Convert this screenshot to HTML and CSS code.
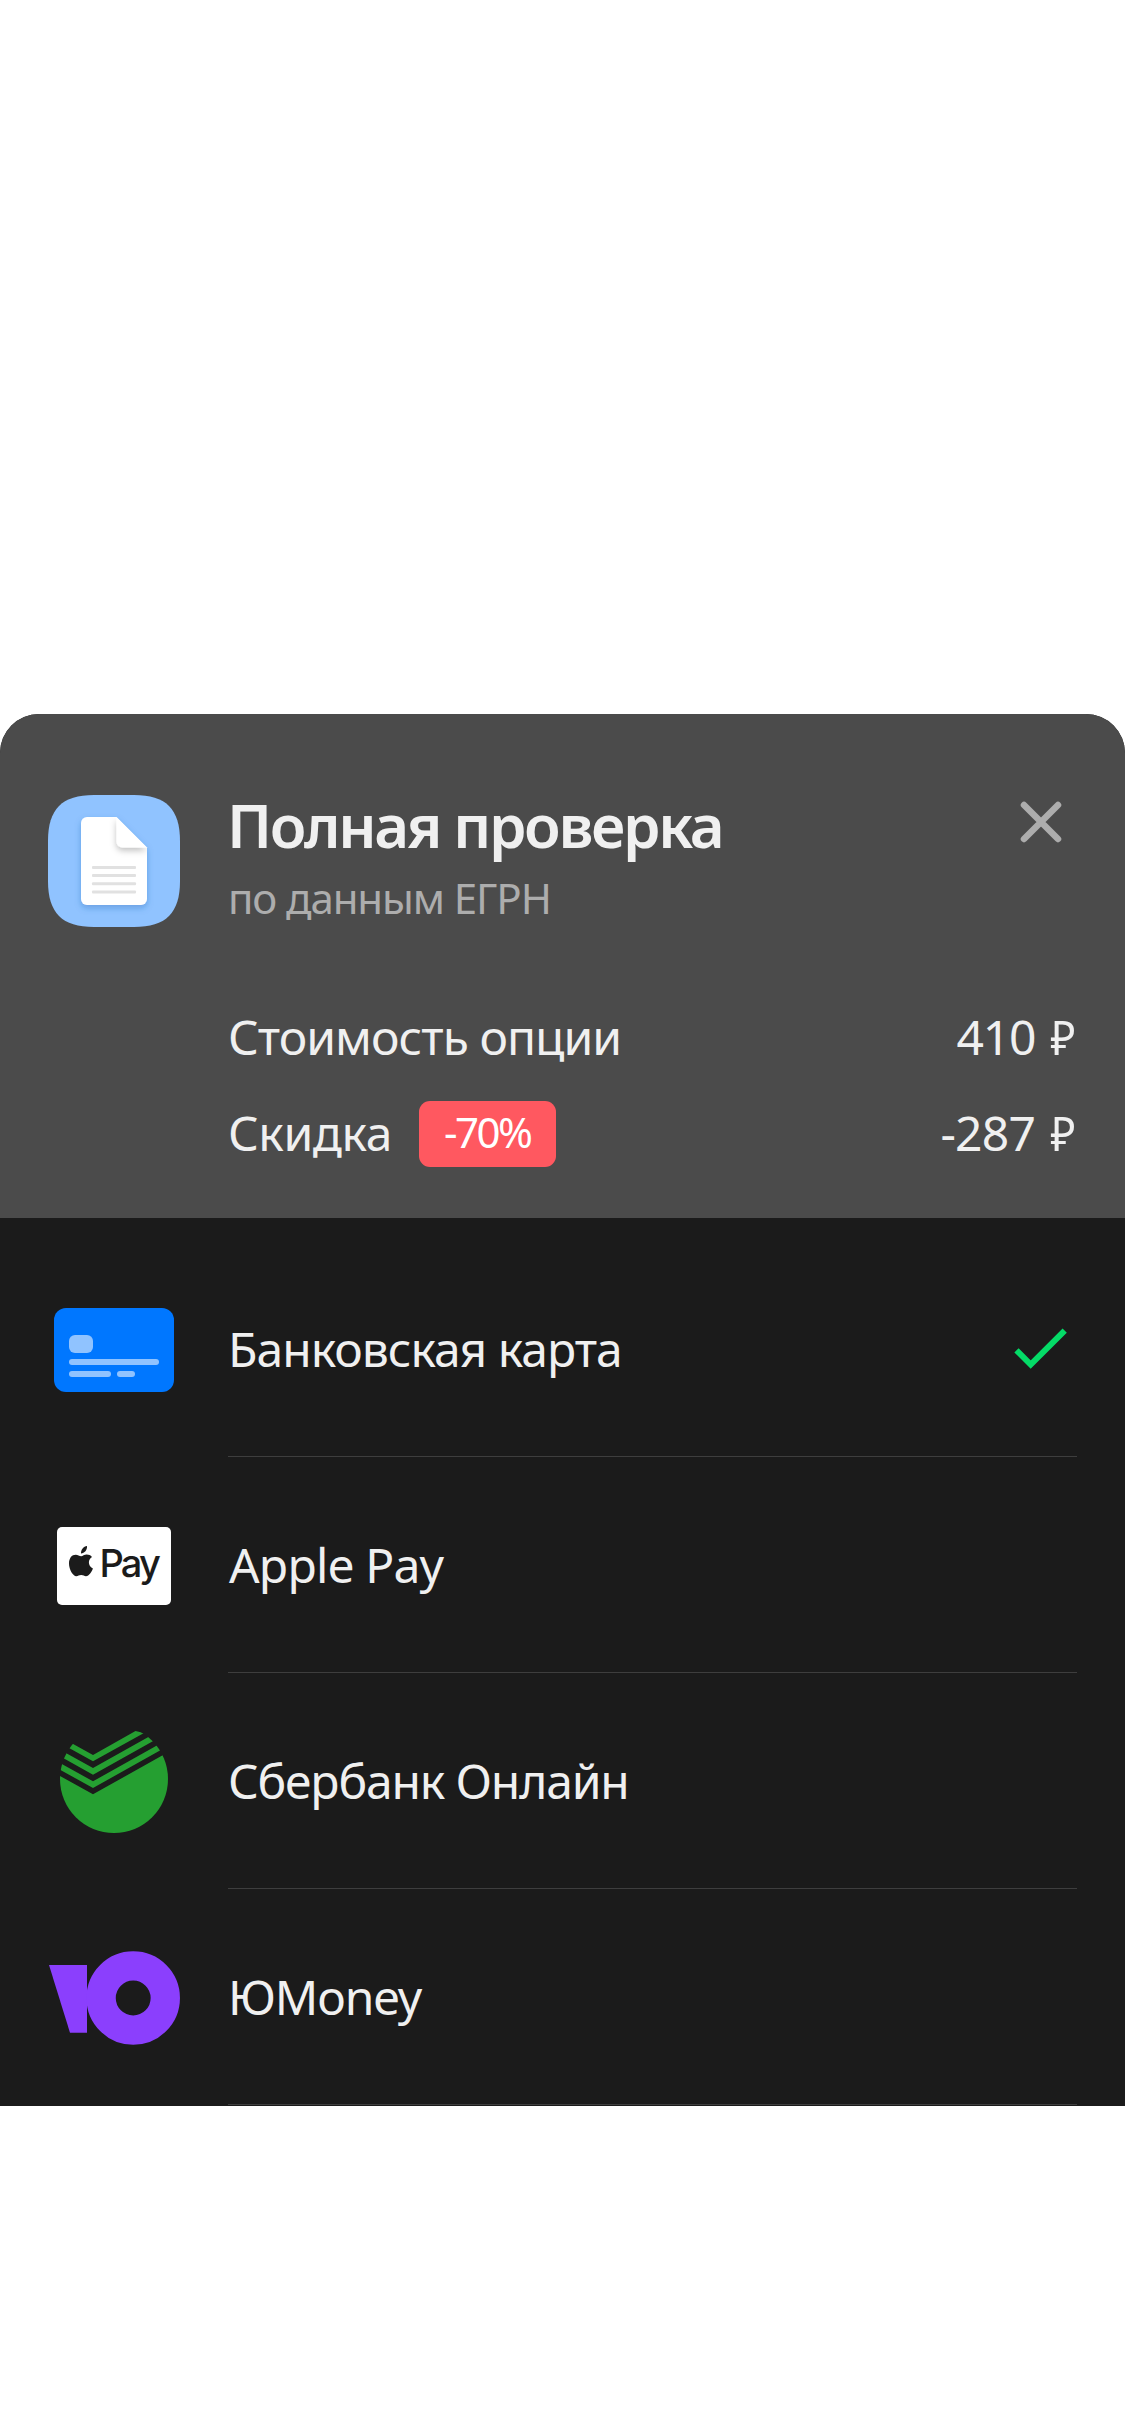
FILE: index.html
```
<!DOCTYPE html>
<html lang="ru">
<head>
<meta charset="utf-8">
<title>Полная проверка</title>
<link rel="stylesheet" href="styles.css">
</head>
<body>
<main class="sheet">
  <header class="summary">
    <div class="product">
      <svg class="product-icon" viewBox="0 0 132 132">
        <defs>
          <filter id="page-shadow" x="-20%" y="-20%" width="140%" height="150%"><feDropShadow dx="0" dy="3" stdDeviation="3" flood-color="#1f5fae" flood-opacity=".35"/></filter>
          <filter id="fold-shadow" x="-30%" y="-30%" width="170%" height="180%"><feDropShadow dx="0" dy="3" stdDeviation="3" flood-color="#000" flood-opacity=".25"/></filter>
          <clipPath id="page"><path d="M39 22h29.5L99 52.5V104a6 6 0 0 1-6 6H39a6 6 0 0 1-6-6V28a6 6 0 0 1 6-6z"/></clipPath>
        </defs>
        <path fill="#90c3ff" d="M0 46C0 14 14 0 46 0H86C118 0 132 14 132 46V86C132 118 118 132 86 132H46C14 132 0 118 0 86z"/>
        <path filter="url(#page-shadow)" fill="#fff" d="M39 22h29.5L99 52.5V104a6 6 0 0 1-6 6H39a6 6 0 0 1-6-6V28a6 6 0 0 1 6-6z"/>
        <g clip-path="url(#page)"><path filter="url(#fold-shadow)" fill="#fff" d="M68.500 22L99 52.500H74.500a6 6 0 0 1-6-6z"/></g>
        <g fill="#e1e1e1"><rect x="44" y="71" width="44" height="3" rx="1"/><rect x="44" y="79" width="44" height="3" rx="1"/><rect x="44" y="87.300" width="44" height="3" rx="1"/><rect x="44" y="95.500" width="44" height="3" rx="1"/></g>
      </svg>
      <div class="product-text">
        <h1 class="title">Полная проверка</h1>
        <p class="subtitle">по данным ЕГРН</p>
      </div>
      <svg class="close" viewBox="0 0 42 42"><path d="M4 4L38 38M38 4L4 38" fill="none" stroke="#adadad" stroke-width="6.500" stroke-linecap="round"/></svg>
    </div>
    <div class="prices">
      <div class="price-row">
        <span class="label">Стоимость опции</span>
        <span class="amount">410</span><span class="currency">₽</span>
      </div>
      <div class="price-row">
        <span class="label label-discount">Скидка</span>
        <span class="badge">-70%</span>
        <span class="amount amount-discount">-287</span><span class="currency">₽</span>
      </div>
    </div>
  </header>
  <ul class="methods">
    <li class="method">
      <svg class="method-icon" viewBox="0 0 132 216">
        <rect x="6" y="67" width="120" height="84" rx="12" fill="#07f"/>
        <g fill="#90c3ff"><rect x="21" y="94" width="24" height="18" rx="6"/><rect x="21" y="118" width="90" height="6" rx="3"/><rect x="21" y="130" width="42" height="6" rx="3"/><rect x="69" y="130" width="18" height="6" rx="3"/></g>
      </svg>
      <div class="method-body">
        <span class="method-name card-name">Банковская карта</span>
        <svg class="check" viewBox="0 0 66 50"><path d="M5.500 26.300L19.700 40.600L53.700 6.700" fill="none" stroke="#04db67" stroke-width="6"/></svg>
      </div>
    </li>
    <li class="method">
      <svg class="method-icon" viewBox="0 0 132 216">
        <rect x="9" y="70" width="114" height="78" rx="5" fill="#fff"/>
        <g fill="#1b1b1b">
          <path d="M33 96.600C32.800 92.700 35.500 89.400 39 89.100C39.400 93 36.400 96.500 33 96.600z"/>
          <path d="M33.200 99.200C31.500 99.200 29.700 97.700 27.800 97.700C23.700 97.700 21 101.100 21 106.500C21 112.700 25.100 119.200 28.300 119.200C30.100 119.200 31 118 33.200 118C35.400 118 36.200 119.200 38 119.200C41 119.200 43.900 114.600 44.900 111.500C42 110.300 40.900 107.800 40.900 105.300C40.900 102.800 42.200 100.900 44 99.900C42.600 98.200 40.700 97.500 38.700 97.500C36.300 97.500 34.600 99.200 33.200 99.200z"/>
          <text class="pay" x="51.500" y="120">Pay</text>
        </g>
      </svg>
      <div class="method-body"><span class="method-name apple-name">Apple Pay</span></div>
    </li>
    <li class="method">
      <svg class="method-icon" viewBox="0 0 132 216">
        <defs><clipPath id="disc"><circle cx="66" cy="106" r="54"/></clipPath></defs>
        <g clip-path="url(#disc)" fill="#259f31">
          <path d="M0 57L45 82L87.500 58L96 60L45 88.300L0 63.300z"/>
          <path d="M0 70L45 95L135 44.600V51.300L45 101.700L0 76.700z"/>
          <path d="M0 83.300L45 108.300L135 57.900V64.600L45 115L0 90z"/>
          <path d="M0 96.300L45 121.300L135 70.900V170H0z"/>
        </g>
      </svg>
      <div class="method-body"><span class="method-name sber-name">Сбербанк Онлайн</span></div>
    </li>
    <li class="method">
      <svg class="method-icon" viewBox="0 0 132 216">
        <path fill="#8b3ffd" d="M1 76H39V143.700H22z"/>
        <circle cx="85.200" cy="109" r="32.100" fill="none" stroke="#8b3ffd" stroke-width="29.300"/>
      </svg>
      <div class="method-body"><span class="method-name yoo-name">ЮMoney</span></div>
    </li>
  </ul>
</main>
</body>
</html>
```
FILE: styles.css
```
* {
  box-sizing: border-box;
  margin: 0;
  padding: 0;
}

body {
  background: #fff;
  font-family: "Noto Sans", sans-serif;
  font-size: 48px;
  color: #f0f0f0;
}

svg {
  display: block;
  flex: none;
}

.sheet {
  margin-top: 714px;
  height: 1392px;
  background: #1b1b1b;
  border-radius: 39px 39px 0 0;
  overflow: hidden;
}

.summary {
  height: 504px;
  padding: 75px 48px 0;
  background: #4b4b4b;
}

.product {
  display: flex;
  align-items: flex-start;
  height: 216px;
}

.product-icon {
  width: 132px;
  height: 132px;
  margin: 6px 47px 0 0;
}

.product-text {
  flex: 1;
}

.title {
  font-size: 60px;
  font-weight: 600;
  line-height: 72px;
  letter-spacing: -2.35px;
}

.subtitle {
  margin-top: 12px;
  padding-left: 1px;
  font-size: 42px;
  line-height: 50px;
  letter-spacing: -1.1px;
  color: #adadad;
}

.close {
  width: 42px;
  height: 42px;
  margin: 12px 15px 0 0;
}

.prices {
  display: flex;
  flex-direction: column;
  gap: 30px;
  padding-left: 180px;
}

.price-row {
  display: flex;
  align-items: flex-start;
  height: 66px;
  line-height: 63px;
}

.label {
  letter-spacing: -0.95px;
}

.label-discount {
  letter-spacing: -0.4px;
}

.badge {
  width: 137px;
  height: 66px;
  margin-left: 27px;
  border-radius: 11px;
  background: #ff5860;
  color: #fff;
  font-size: 42px;
  line-height: 62px;
  letter-spacing: -2.5px;
  padding-left: 25px;
}

.amount {
  margin-left: auto;
  letter-spacing: -1.3px;
}

.amount-discount {
  letter-spacing: -0.8px;
}

.currency {
  margin-left: 14px;
  transform: scaleX(0.9);
}

.methods {
  list-style: none;
  padding: 23px 48px 0;
}

.method {
  display: flex;
  gap: 48px;
  height: 216px;
}

.method-icon {
  width: 132px;
  height: 216px;
}

.pay {
  font-family: Inter, sans-serif;
  font-size: 38px;
  font-weight: 500;
  letter-spacing: -2.9px;
}

.method-body {
  flex: 1;
  display: flex;
  align-items: center;
  justify-content: space-between;
  border-bottom: 1px solid #3e3e3e;
}

.method-name {
  line-height: 215px;
}

.card-name {
  letter-spacing: -1px;
}

.apple-name {
  padding-left: 1px;
  letter-spacing: -0.9px;
}

.sber-name {
  letter-spacing: -1.15px;
}

.yoo-name {
  letter-spacing: -1.3px;
}

.check {
  width: 66px;
  height: 50px;
}
```
